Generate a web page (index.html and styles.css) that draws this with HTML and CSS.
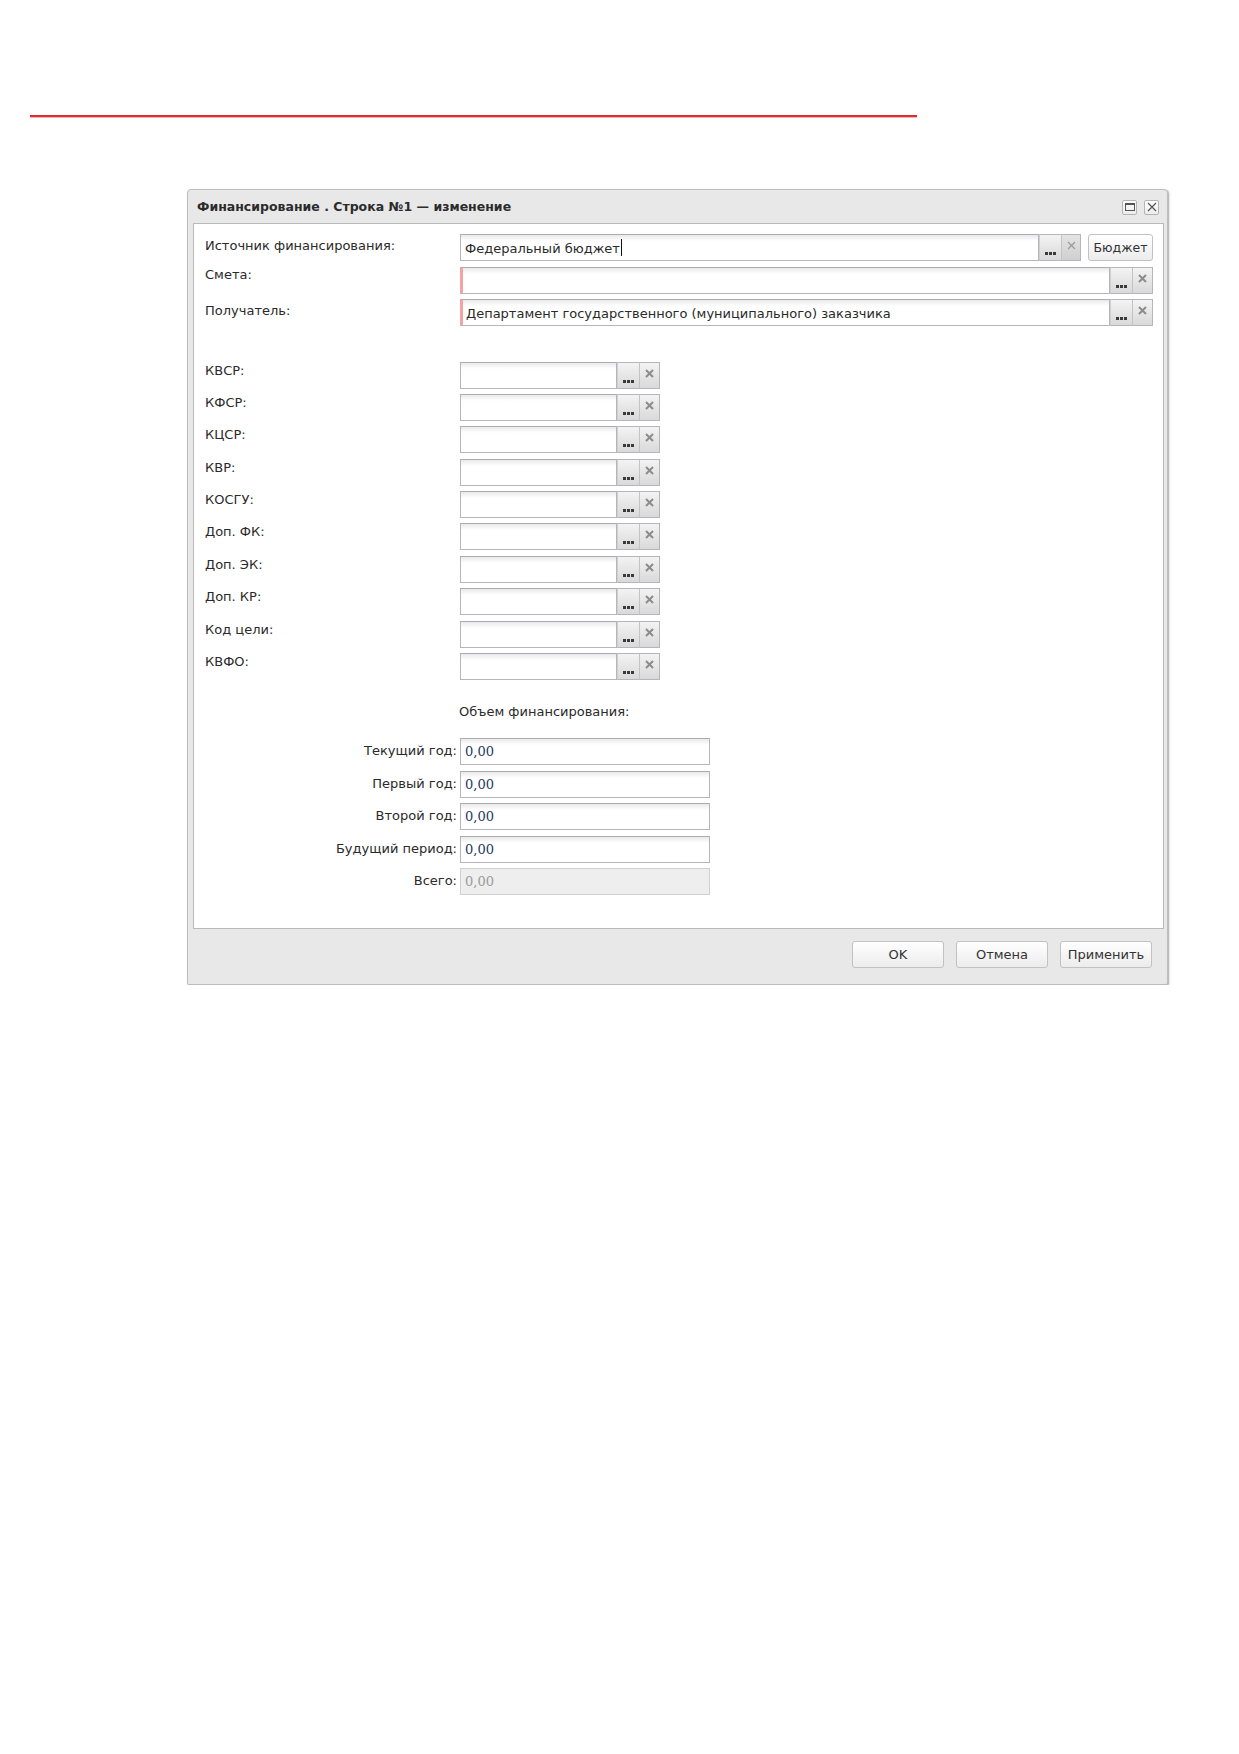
FILE: index.html
```html
<!DOCTYPE html>
<html>
<head>
	<meta charset="utf-8">
	<title>Финансирование</title>
	<link rel="stylesheet" href="styles.css">
</head>

<body>
	<div class="red-rule"></div>

	<div class="window">
		<div class="window-header">
			<span class="window-title">Финансирование . Строка №1 — изменение</span>
			<div class="window-tools">
				<span class="tool">
					<svg width="10" height="8" viewBox="0 0 10 8"><rect x="0.5" y="0.5" width="9" height="7" fill="none" stroke="#555" stroke-width="1"/><rect x="0.5" y="0.5" width="9" height="1.5" fill="#555"/></svg>
				</span>
				<span class="tool">
					<svg width="10" height="10" viewBox="0 0 10 10"><path d="M1 1 L9 9 M9 1 L1 9" stroke="#555" stroke-width="1.2"/></svg>
				</span>
			</div>
		</div>

		<div class="window-body">
			<div class="form">

				<!-- реквизиты источника -->
				<div class="row">
					<div class="label">Источник финансирования:</div>
					<div class="field-line">
						<div class="field field-wide">
							<div class="input"><span class="value">Федеральный бюджет</span><span class="caret"></span></div>
							<span class="trigger trigger-dots"><i></i><i></i><i></i></span>
							<span class="trigger trigger-clear light"><svg width="9" height="9" viewBox="0 0 9 9"><path d="M1 1 L8 8 M8 1 L1 8" stroke="#9a9a9a" stroke-width="1.2"/></svg></span>
						</div>
						<button class="btn btn-budget">Бюджет</button>
					</div>
				</div>

				<div class="row">
					<div class="label label-high">Смета:</div>
					<div class="field field-wide">
						<div class="input required"></div>
						<span class="trigger trigger-dots"><i></i><i></i><i></i></span>
						<span class="trigger trigger-clear"><svg width="9" height="9" viewBox="0 0 9 9"><path d="M1 1 L8 8 M8 1 L1 8" stroke="#8c8c8c" stroke-width="2"/></svg></span>
					</div>
				</div>

				<div class="row">
					<div class="label">Получатель:</div>
					<div class="field field-wide">
						<div class="input required"><span class="value">Департамент государственного (муниципального) заказчика</span></div>
						<span class="trigger trigger-dots"><i></i><i></i><i></i></span>
						<span class="trigger trigger-clear"><svg width="9" height="9" viewBox="0 0 9 9"><path d="M1 1 L8 8 M8 1 L1 8" stroke="#8c8c8c" stroke-width="2"/></svg></span>
					</div>
				</div>

				<!-- коды классификации -->
				<div id="codes" class="section-codes"></div>

				<div class="amount-title">Объем финансирования:</div>

				<div class="row row-amount">
					<div class="label label-right">Текущий год:</div>
					<div class="amount">0,00</div>
				</div>
				<div class="row row-amount">
					<div class="label label-right">Первый год:</div>
					<div class="amount">0,00</div>
				</div>
				<div class="row row-amount">
					<div class="label label-right">Второй год:</div>
					<div class="amount">0,00</div>
				</div>
				<div class="row row-amount">
					<div class="label label-right">Будущий период:</div>
					<div class="amount">0,00</div>
				</div>
				<div class="row row-amount">
					<div class="label label-right">Всего:</div>
					<div class="amount amount-disabled">0,00</div>
				</div>

			</div>
		</div>

		<div class="window-footer">
			<button class="btn btn-footer">OK</button>
			<button class="btn btn-footer">Отмена</button>
			<button class="btn btn-footer">Применить</button>
		</div>
	</div>

	<script>
		// строки справочников: подпись + пустое поле с выбором и очисткой
		const codeLabels = ["КВСР:", "КФСР:", "КЦСР:", "КВР:", "КОСГУ:", "Доп. ФК:", "Доп. ЭК:", "Доп. КР:", "Код цели:", "КВФО:"];
		const codes = document.getElementById('codes');

		codeLabels.forEach(function (text) {
			const row = document.createElement('div');
			row.className = 'row';
			row.innerHTML =
				'<div class="label label-code">' + text + '</div>' +
				'<div class="field field-small">' +
					'<div class="input"></div>' +
					'<span class="trigger trigger-dots"><i></i><i></i><i></i></span>' +
					'<span class="trigger trigger-clear"><svg width="9" height="9" viewBox="0 0 9 9"><path d="M1 1 L8 8 M8 1 L1 8" stroke="#8c8c8c" stroke-width="2"/></svg></span>' +
				'</div>';
			codes.appendChild(row);
		});
	</script>
</body>
</html>
```

FILE: styles.css
```css
html {
	margin: 0;
	padding: 0;
}

body {
	margin: 0;
	padding: 0;
	background-color: white;
	font-family: "DejaVu Sans", Tahoma, sans-serif;
	font-size: 13px;
	color: #2a2a2a;
}

.red-rule {
	margin-left: 30px;
	margin-top: 115px;
	width: 887px;
	height: 2px;
	background-color: #e42a2f;
	box-shadow: 0 1px 0 #f6b3b5;
}

/* окно */
.window {
	margin-left: 187px;
	margin-top: 72px;
	width: 979px;
	border: 1px solid #bdbdbd;
	border-radius: 4px 4px 2px 2px;
	background-color: #e8e8e8;
	box-shadow: 1px 1px 2px rgba(0, 0, 0, 0.35);
}

.window-header {
	height: 33px;
	display: flex;
	align-items: center;
	justify-content: space-between;
	padding: 0 8px 0 9px;
}

.window-title {
	font-weight: bold;
	font-size: 12.5px;
	color: #2b2b2b;
}

.window-tools {
	display: flex;
	gap: 7px;
	margin-top: 1px;
}

.tool {
	width: 13px;
	height: 13px;
	border: 1px solid #b4b4b4;
	border-radius: 2px;
	background: linear-gradient(#ffffff, #ececec);
	display: flex;
	align-items: center;
	justify-content: center;
}

.window-body {
	margin: 0 3px 0 5px;
	height: 704px;
	border: 1px solid #b9b9b9;
	background-color: white;
}

.form {
	padding: 10px 10px 0 11px;
	display: flex;
	flex-direction: column;
	gap: 5.5px;
}

.row {
	display: grid;
	grid-template-columns: 255px 1fr;
	align-items: start;
	min-height: 27px;
}

.label {
	line-height: 16px;
	padding-top: 4px;
	white-space: nowrap;
}

.label-high {
	padding-top: 0;
}

.label-code {
	padding-top: 1px;
}

.label-right {
	text-align: right;
	padding-right: 3px;
	padding-top: 5px;
}

/* поля ввода */
.field-line {
	display: flex;
	gap: 7px;
}

.field {
	display: flex;
	height: 27px;
}

.field-wide {
	flex: 1;
}

.field-small {
	width: 200px;
}

.input {
	flex: 1;
	min-width: 0;
	box-sizing: border-box;
	height: 27px;
	border: 1px solid #b5b6bd;
	border-top-color: #a9aab2;
	background: linear-gradient(#e9e9e9, #ffffff 6px);
	display: flex;
	align-items: center;
	padding-left: 4px;
	white-space: nowrap;
	overflow: hidden;
}

.input.required {
	border-left: 3px solid #f2a3a3;
	padding-left: 3px;
}

.value {
	line-height: 16px;
	padding-top: 2px;
}

.caret {
	display: inline-block;
	width: 1px;
	height: 17px;
	background-color: #111;
	margin-left: 1px;
}

.trigger {
	box-sizing: border-box;
	height: 27px;
	border-top: 1px solid #b5b6bd;
	border-bottom: 1px solid #b5b6bd;
	background: linear-gradient(#f3f3f3, #d9d9d9);
	display: flex;
	justify-content: center;
}

.trigger-dots {
	width: 22px;
	border-left: 1px solid #cfcfcf;
	align-items: flex-end;
	gap: 1px;
	padding-bottom: 5px;
}

.trigger-dots i {
	display: block;
	width: 3px;
	height: 3px;
	background-color: #3a3a3a;
}

.trigger-clear {
	width: 21px;
	border-left: 1px solid #c3c3c3;
	border-right: 1px solid #b5b6bd;
	align-items: flex-start;
	padding-top: 6px;
}

.trigger-clear.light {
	width: 20px;
	background: linear-gradient(#e4e4e4, #cfcfcf);
}

/* кнопки */
.btn {
	font-family: "DejaVu Sans", Tahoma, sans-serif;
	font-size: 13px;
	color: #333;
	border: 1px solid #c2c2c2;
	border-radius: 3px;
	background: linear-gradient(#ffffff, #ececec);
	padding: 0;
	cursor: pointer;
}

.btn-budget {
	width: 65px;
	height: 27px;
	font-size: 12.5px;
}

.section-codes {
	margin-top: 30px;
	display: flex;
	flex-direction: column;
	gap: 5.4px;
}

.amount-title {
	margin-top: 18px;
	margin-left: 254px;
	line-height: 16px;
	height: 29px;
}

.row-amount .amount {
	box-sizing: border-box;
	width: 250px;
	height: 27px;
	border: 1px solid #b5b6bd;
	border-top-color: #a9aab2;
	background: linear-gradient(#e9e9e9, #ffffff 6px);
	font-family: "DejaVu Serif", "Liberation Serif", serif;
	font-size: 13px;
	color: #1e3a60;
	padding: 5px 0 0 4px;
}

.row-amount .amount-disabled {
	background: #eeeeee;
	border-color: #d0d0d0;
	color: #9a9a9a;
}

.window-footer {
	height: 55px;
	display: flex;
	justify-content: flex-end;
	align-items: flex-start;
	gap: 12px;
	padding: 12px 15px 0 0;
	box-sizing: border-box;
}

.btn-footer {
	width: 92px;
	height: 27px;
}
```
